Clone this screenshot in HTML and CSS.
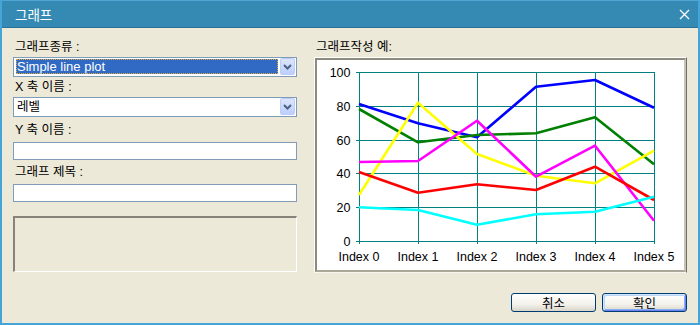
FILE: index.html
```html
<!DOCTYPE html>
<html lang="ko">
<head>
<meta charset="utf-8">
<title>그래프</title>
<link rel="stylesheet" href="styles.css">
</head>
<body>
<div class="window">
  <div class="titlebar">
    <span class="title">그래프</span>
    <svg class="close" width="11" height="11" viewBox="0 0 11 11"><path d="M1 1 L10 10 M10 1 L1 10" stroke="#fff" stroke-width="1.3" fill="none"/></svg>
  </div>
  <div class="body">
    <div class="panels">
      <div class="left">
        <div class="label l1">그래프종류 :</div>
        <div class="combo">
          <div class="combo-value"><span class="sel">Simple line plot</span></div>
          <div class="combo-btn"><svg width="9" height="6" viewBox="0 0 9 6"><path d="M1 1 L4.5 4.5 L8 1" stroke="#4d6185" stroke-width="2" fill="none"/></svg></div>
        </div>
        <div class="label l2">X 축 이름 :</div>
        <div class="combo">
          <div class="combo-value"><span class="plain">레벨</span></div>
          <div class="combo-btn"><svg width="9" height="6" viewBox="0 0 9 6"><path d="M1 1 L4.5 4.5 L8 1" stroke="#4d6185" stroke-width="2" fill="none"/></svg></div>
        </div>
        <div class="label l3">Y 축 이름 :</div>
        <div class="input"></div>
        <div class="label l4">그래프 제목 :</div>
        <div class="input"></div>
        <div class="preview-box"></div>
      </div>
      <div class="right">
        <div class="label l1">그래프작성 예:</div>
        <div class="chart-frame">
          <div class="chart-inner">
            <svg class="chart" width="367" height="210" viewBox="0 0 367 210">
              <g stroke="#008080" stroke-width="1" fill="none" shape-rendering="crispEdges">
                <path d="M39 12.5 H338 M39 46.5 H338 M39 80.5 H338 M39 113.5 H338 M39 147.5 H338 M39 181.5 H338"/>
                <path d="M42.5 12 V184 M101.5 12 V184 M160.5 12 V184 M219.5 12 V184 M278.5 12 V184 M337.5 12 V184"/>
              </g>
              <g font-family="Liberation Sans, Arial, sans-serif" font-size="12.5" fill="#000" text-anchor="end">
                <text x="33.5" y="17">100</text>
                <text x="33.5" y="51">80</text>
                <text x="33.5" y="85">60</text>
                <text x="33.5" y="118">40</text>
                <text x="33.5" y="152">20</text>
                <text x="33.5" y="186">0</text>
              </g>
              <g font-family="Liberation Sans, Arial, sans-serif" font-size="12.5" fill="#000" text-anchor="middle">
                <text x="42" y="200.5">Index 0</text>
                <text x="101" y="200.5">Index 1</text>
                <text x="160" y="200.5">Index 2</text>
                <text x="219" y="200.5">Index 3</text>
                <text x="278" y="200.5">Index 4</text>
                <text x="337" y="200.5">Index 5</text>
              </g>
              <g fill="none" stroke-width="2.6" stroke-linejoin="round">
                <polyline stroke="#0000ff" points="42,44 101,63.3 160,77.3 219,26.7 278,20 337,47.7"/>
                <polyline stroke="#008000" points="42,49 101,82.3 160,75 219,73.3 278,57.3 337,104.3"/>
                <polyline stroke="#ffff00" points="42,135 101,42.7 160,94 219,115.7 278,123.3 337,90.7"/>
                <polyline stroke="#ff00ff" points="42,102 101,101 160,60.7 219,116.7 278,85.7 337,160.7"/>
                <polyline stroke="#ff0000" points="42,112 101,132.7 160,124.3 219,130 278,106.7 337,140"/>
                <polyline stroke="#00ffff" points="42,147.3 101,150 160,164.7 219,154.3 278,151.7 337,136.7"/>
              </g>
            </svg>
          </div>
        </div>
      </div>
    </div>
    <div class="buttons">
      <button class="btn">취소</button>
      <button class="btn default">확인</button>
    </div>
  </div>
</div>
</body>
</html>
```
FILE: styles.css
```css
html, body {
  margin: 0;
  padding: 0;
}
body {
  font-family: "Liberation Sans", "Noto Sans CJK KR", sans-serif;
  font-size: 12.5px;
  color: #000;
}
.window {
  width: 700px;
  height: 325px;
  box-sizing: border-box;
  background: #ece9d8;
  border: 2px solid #45a5d9;
  border-top: none;
  display: flex;
  flex-direction: column;
}
.titlebar {
  height: 28px;
  box-sizing: border-box;
  background: #358ab4;
  border-top: 1px solid #4ea6d4;
  border-bottom: 1px solid #2b7096;
  display: flex;
  align-items: center;
}
.title {
  color: #fff;
  font-family: "Noto Sans CJK KR", sans-serif;
  font-size: 13.5px;
  margin-left: 13px;
}
.close {
  margin-left: auto;
  margin-right: 8px;
}
.body {
  flex: 1;
  padding: 8px 11px 0 11px;
  display: flex;
  flex-direction: column;
}
.panels {
  display: grid;
  grid-template-columns: 284px 373px;
  column-gap: 17px;
}
.left, .right {
  display: flex;
  flex-direction: column;
}
.label {
  display: flex;
  align-items: center;
  padding-left: 2px;
  white-space: pre;
  line-height: 14px;
}
.l1 { height: 21px; }
.l2 { height: 20px; }
.l3 { height: 25px; }
.l4 { height: 24px; }
.combo {
  height: 20px;
  box-sizing: border-box;
  border: 1px solid #7f9db9;
  background: #fff;
  display: flex;
}
.combo-value {
  flex: 1;
  margin: 1px 2px 2px 2px;
  display: flex;
}
.sel {
  flex: 1;
  background: #316ac5;
  color: #fff;
  outline: 1px dotted #e3a93c;
  outline-offset: -1px;
  padding-left: 1px;
  font-size: 13px;
  line-height: 15px;
}
.plain {
  padding-left: 1px;
  line-height: 16px;
}
.combo-btn {
  width: 15px;
  margin: 0 1px 1px 0;
  box-sizing: border-box;
  border: 1px solid #bccdf7;
  border-radius: 2px;
  background: linear-gradient(#dbe5fe, #bccffb);
  display: flex;
  align-items: center;
  justify-content: center;
}
.input {
  height: 18px;
  box-sizing: border-box;
  border: 1px solid #7f9db9;
  background: #fff;
}
.preview-box {
  margin-top: 14px;
  height: 56px;
  box-sizing: border-box;
  border-style: solid;
  border-width: 2px 1px 1px 2px;
  border-color: #86837a #fff #fff #86837a;
}
.chart-frame {
  height: 216px;
  box-sizing: border-box;
  border: 1px solid;
  border-color: #fff #716f64 #f7f6ef #fff;
}
.chart-inner {
  height: 100%;
  box-sizing: border-box;
  border: 2px solid;
  border-color: #8d8a7e #c8c5b8 #aca899 #8d8a7e;
  background: #fff;
}
.chart {
  display: block;
}
.buttons {
  display: flex;
  justify-content: flex-end;
  gap: 6px;
  margin-top: 20px;
}
.btn {
  width: 85px;
  height: 19px;
  box-sizing: border-box;
  padding: 0;
  border: 1px solid #003c74;
  border-radius: 3px;
  background: linear-gradient(#ffffff, #f3f2ec 60%, #d9d5c9);
  font-family: "Noto Sans CJK KR", sans-serif;
  font-size: 12.5px;
  line-height: 15px;
  color: #000;
}
.btn.default {
  box-shadow: inset 1px 1px 0 #cee7ff, inset -1px -1px 0 #6982ee, inset 2px 2px 0 #bcd4f6, inset -2px -2px 0 #89adf4;
}
```
